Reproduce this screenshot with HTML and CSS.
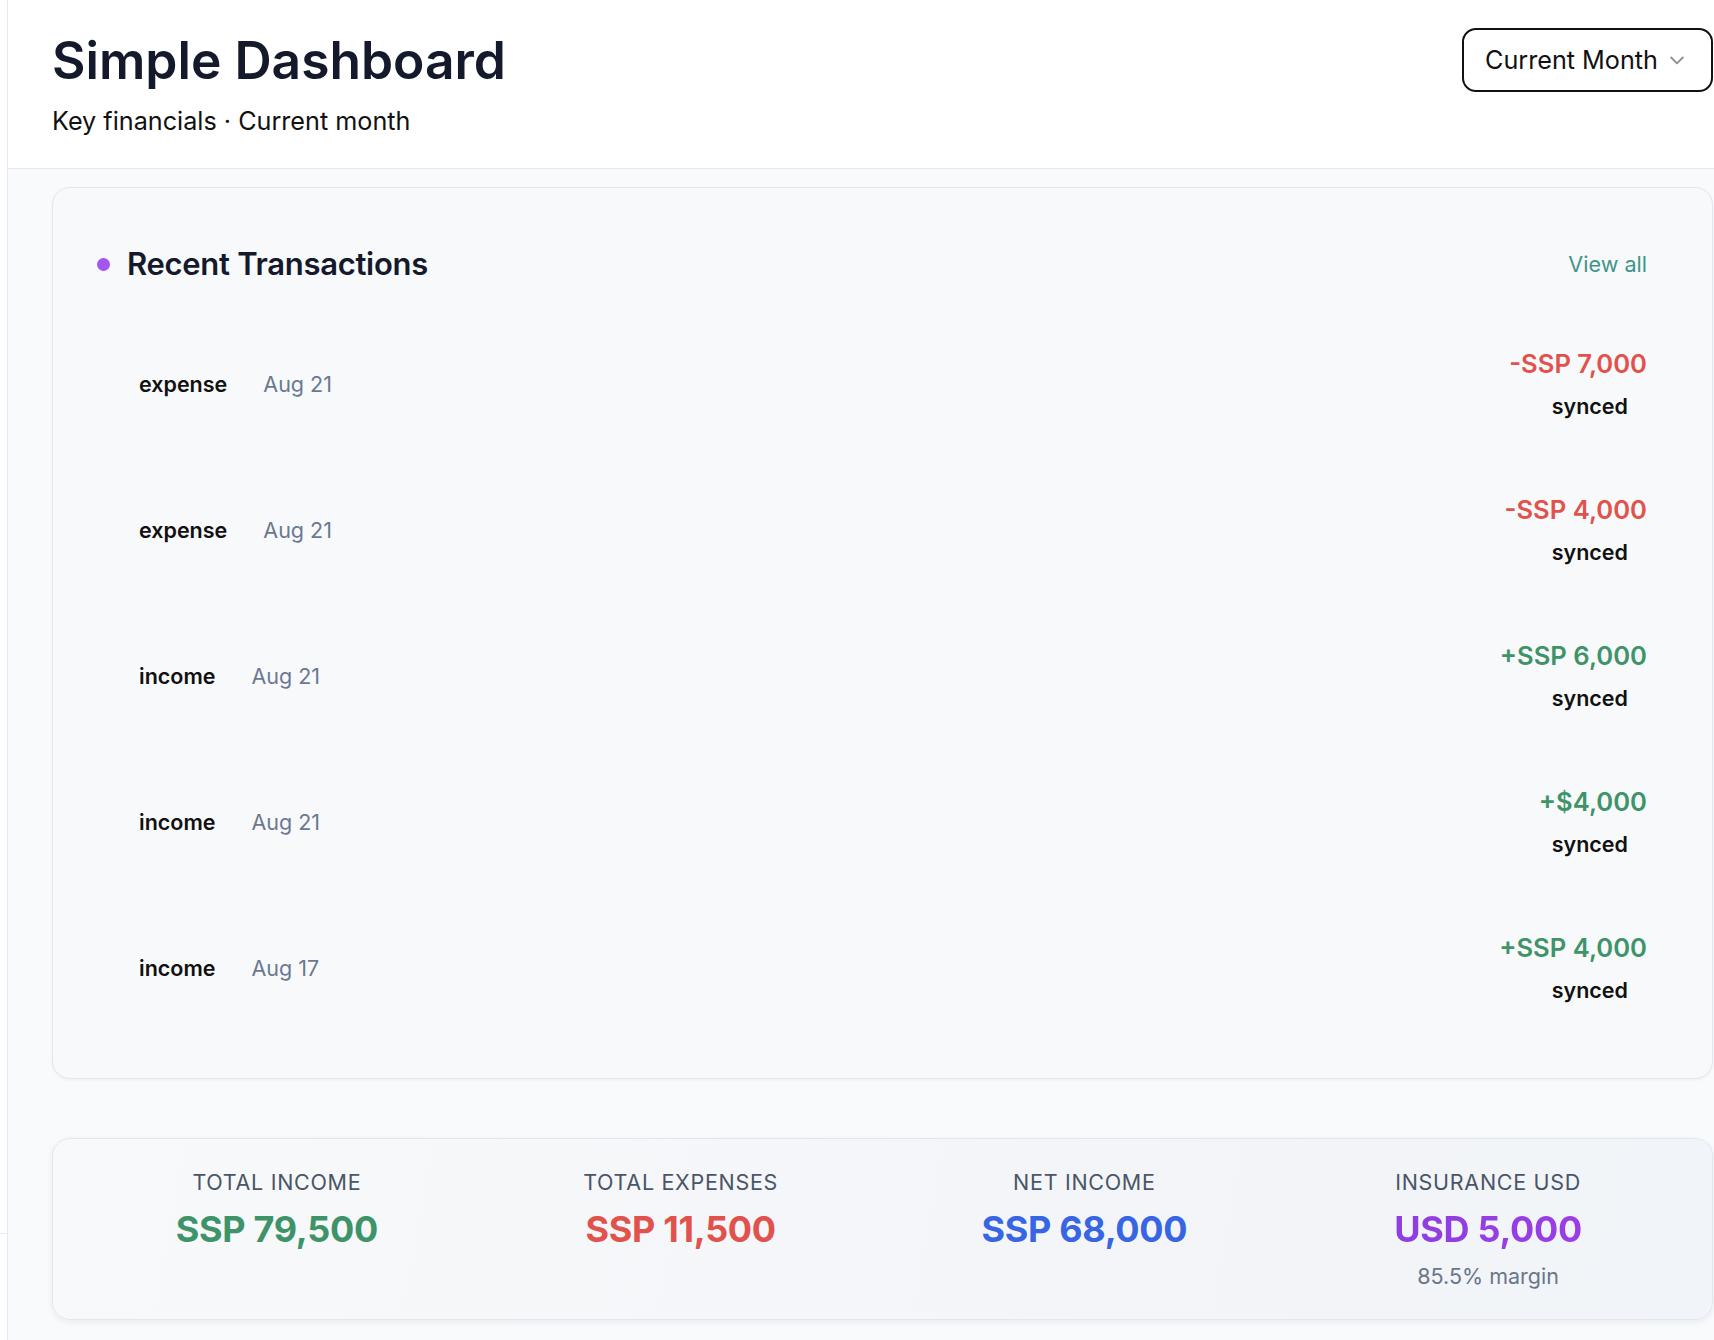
FILE: index.html
```html
<!DOCTYPE html>
<html lang="en">
<head>
<meta charset="utf-8">
<title>Simple Dashboard</title>
<link rel="stylesheet" href="styles.css">
</head>
<body>
<div class="app">
  <aside class="sidebar"><div class="sidebar-top"></div></aside>
  <main class="main">
    <header class="topbar">
      <div class="titles">
        <h1 class="title">Simple Dashboard</h1>
        <p class="subtitle">Key financials · Current month</p>
      </div>
      <button class="period">Current Month
        <svg class="chev" width="20" height="20" viewBox="0 0 24 24" fill="none" stroke="#8a8f98" stroke-width="2.2" stroke-linecap="round" stroke-linejoin="round"><path d="M5 9l7 7 7-7"/></svg>
      </button>
    </header>
    <div class="content">
      <section class="card tx-card">
        <div class="tx-head">
          <div class="tx-title"><span class="dot"></span><h2>Recent Transactions</h2></div>
          <a class="view-all">View all</a>
        </div>
        <ul class="tx-list">
          <li class="tx">
            <div class="tx-left"><span class="tx-type">expense</span><span class="tx-date">Aug 21</span></div>
            <div class="tx-right"><span class="amt neg">-SSP 7,000</span><span class="status">synced</span></div>
          </li>
          <li class="tx">
            <div class="tx-left"><span class="tx-type">expense</span><span class="tx-date">Aug 21</span></div>
            <div class="tx-right"><span class="amt neg">-SSP 4,000</span><span class="status">synced</span></div>
          </li>
          <li class="tx">
            <div class="tx-left"><span class="tx-type">income</span><span class="tx-date">Aug 21</span></div>
            <div class="tx-right"><span class="amt pos">+SSP 6,000</span><span class="status">synced</span></div>
          </li>
          <li class="tx">
            <div class="tx-left"><span class="tx-type">income</span><span class="tx-date">Aug 21</span></div>
            <div class="tx-right"><span class="amt pos">+$4,000</span><span class="status">synced</span></div>
          </li>
          <li class="tx">
            <div class="tx-left"><span class="tx-type">income</span><span class="tx-date">Aug 17</span></div>
            <div class="tx-right"><span class="amt pos">+SSP 4,000</span><span class="status">synced</span></div>
          </li>
        </ul>
      </section>
      <section class="card summary">
        <div class="stat">
          <div class="stat-label">Total Income</div>
          <div class="stat-value green">SSP 79,500</div>
        </div>
        <div class="stat">
          <div class="stat-label">Total Expenses</div>
          <div class="stat-value red">SSP 11,500</div>
        </div>
        <div class="stat">
          <div class="stat-label">Net Income</div>
          <div class="stat-value blue">SSP 68,000</div>
        </div>
        <div class="stat">
          <div class="stat-label">Insurance USD</div>
          <div class="stat-value purple">USD 5,000</div>
          <div class="stat-note">85.5% margin</div>
        </div>
      </section>
    </div>
  </main>
</div>
</body>
</html>
```

FILE: styles.css
```css
* { box-sizing: border-box; }
html, body { margin: 0; padding: 0; }
body {
  font-family: Inter, "Noto Sans", "Liberation Sans", sans-serif;
  background: #f8fafc;
  color: #111;
  overflow: hidden;
}
.app {
  display: flex;
  width: 1714px;
  height: 1340px;
}
.sidebar {
  width: 8px;
  flex: none;
  background: #fff;
  border-right: 1px solid #e6e9ee;
}
.sidebar-top {
  height: 1234px;
  border-bottom: 1px solid #e6e9ee;
}
.main {
  flex: 1;
  display: flex;
  flex-direction: column;
  background: #f8fafc;
}
.topbar {
  display: flex;
  justify-content: space-between;
  align-items: flex-start;
  background: #fff;
  border-bottom: 1px solid #e3e8ef;
  padding: 30px 1px 31px 44px;
}
.title {
  margin: 0;
  font-size: 51.5px;
  line-height: 60px;
  font-weight: 600;
  color: #141a2c;
}
.subtitle {
  margin: 15px 0 0;
  font-size: 25.2px;
  line-height: 32px;
  color: #111;
}
.period {
  display: flex;
  align-items: center;
  gap: 9px;
  height: 64px;
  margin-top: -2px;
  padding: 0 24px 0 21px;
  background: #fff;
  border: 2px solid #111;
  border-radius: 14px;
  font-family: inherit;
  font-size: 25.2px;
  color: #111;
}
.chev { display: block; }
.content {
  display: flex;
  flex-direction: column;
  gap: 59px;
  padding: 18px 1px 0 44px;
}
.card {
  border: 1px solid #e2e7ef;
  border-radius: 18px;
  background: #f8f9fb;
}
.tx-card {
  padding: 58px 65px 37px 44px;
  box-shadow: 0 1px 3px rgba(30, 41, 59, 0.05);
}
.tx-head {
  display: flex;
  justify-content: space-between;
  align-items: center;
  height: 36px;
}
.tx-title {
  display: flex;
  align-items: center;
  gap: 17px;
}
.dot {
  width: 13px;
  height: 13px;
  border-radius: 50%;
  background: #a455ef;
}
.tx-title h2 {
  margin: 0;
  font-size: 31px;
  line-height: 36px;
  font-weight: 600;
  color: #141a2c;
  letter-spacing: -0.3px;
}
.view-all {
  font-size: 21.6px;
  color: #3f9589;
}
.tx-list {
  list-style: none;
  margin: 29px 0 0;
  padding: 0;
}
.tx {
  display: flex;
  justify-content: space-between;
  align-items: center;
  height: 146px;
  padding-left: 42px;
}
.tx-left {
  display: flex;
  align-items: center;
  gap: 36px;
}
.tx-type {
  font-size: 21.5px;
  font-weight: 600;
  color: #111;
}
.tx-date {
  font-size: 21.5px;
  color: #6b7891;
}
.tx-right {
  display: flex;
  flex-direction: column;
  align-items: flex-end;
}
.amt {
  font-size: 25.6px;
  line-height: 32px;
  font-weight: 600;
}
.amt.neg { color: #e0524b; }
.amt.pos { color: #3e9468; }
.status {
  margin-top: 12px;
  margin-right: 19px;
  font-size: 21.5px;
  line-height: 28px;
  font-weight: 600;
  color: #111;
}
.summary {
  display: grid;
  grid-template-columns: repeat(4, 1fr);
  align-items: start;
  padding: 29px 22px;
  background: linear-gradient(100deg, #f7f9fb 0%, #f3f5f8 60%, #f1f4f8 100%);
  box-shadow: 0 2px 6px rgba(30, 41, 59, 0.07);
}
.stat {
  display: flex;
  flex-direction: column;
  align-items: center;
}
.stat-label {
  font-size: 21.5px;
  line-height: 28px;
  text-transform: uppercase;
  letter-spacing: 0.7px;
  color: #4a5567;
}
.stat-value {
  margin-top: 11px;
  font-size: 36px;
  line-height: 44px;
  font-weight: 700;
  letter-spacing: -0.3px;
}
.green { color: #3e9468; }
.red { color: #e0524b; }
.blue { color: #3765e4; }
.purple {
  background: linear-gradient(90deg, #8d3fe0, #9b3de6);
  -webkit-background-clip: text;
  background-clip: text;
  color: transparent;
}
.stat-note {
  margin-top: 11px;
  font-size: 21.5px;
  line-height: 28px;
  color: #6b7588;
}
```
